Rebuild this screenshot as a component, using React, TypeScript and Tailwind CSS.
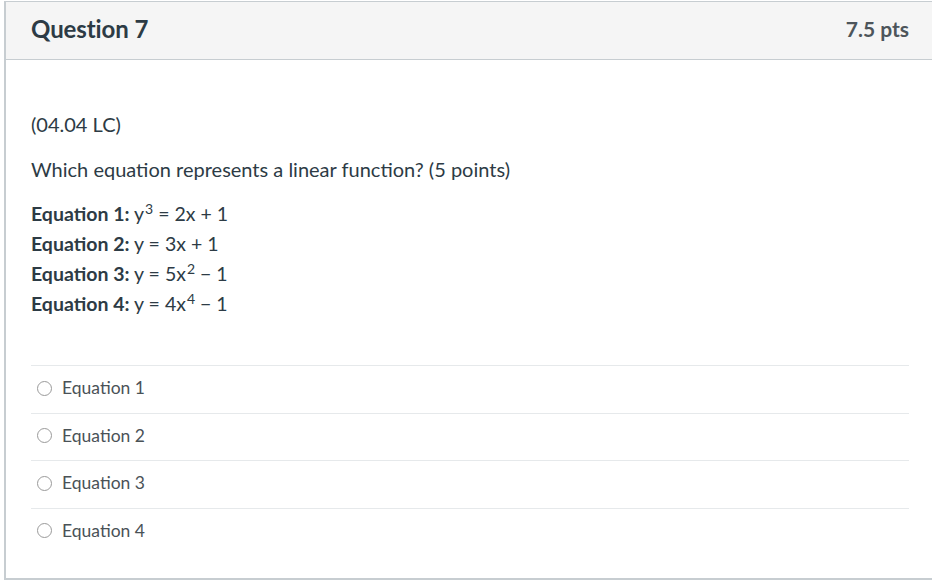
import React from "react";

const equations = [
  { label: "Equation 1:", lhs: "y", lhsSup: "3", rest: " = 2x + 1" },
  { label: "Equation 2:", body: "y = 3x + 1" },
  { label: "Equation 3:", body: "y = 5x", sup: "2", tail: " − 1" },
  { label: "Equation 4:", body: "y = 4x", sup: "4", tail: " − 1" },
];

const answers = ["Equation 1", "Equation 2", "Equation 3", "Equation 4"];

function Radio() {
  return <span className="inline-block h-[15px] w-[15px] shrink-0 rounded-full border border-[#9a9a9a] bg-white" />;
}

export default function App() {
  return (
    <div className="h-[581px] w-[932px] overflow-hidden bg-white font-['Lato',sans-serif] text-[#2d3b45]">
      <div className="ml-[4px] mt-[1px] h-[579px] border-l-2 border-t border-b-2 border-[#c7cdd1]">
        <div className="flex h-[58px] items-center justify-between border-b border-[#c7cdd1] bg-[#f5f5f5] pb-[4px] pl-[25px] pr-[23px]">
          <h2 className="text-[24px] font-bold tracking-[-0.1px]">Question 7</h2>
          <span className="text-[21px] font-bold text-[#4d555b]">7.5 pts</span>
        </div>
        <div className="pl-[25px] pr-[23px] pt-[52px]">
          <p className="text-[20px] leading-[24px]">(04.04 LC)</p>
          <p className="mt-[21px] text-[20px] leading-[24px]">Which equation represents a linear function? (5 points)</p>
          <div className="mt-[18px] text-[19.5px] leading-[30px]">
            {equations.map((e) => (
              <div key={e.label}>
                <span className="font-bold">{e.label}</span>{" "}
                {e.lhs ? (
                  <>
                    {e.lhs}
                    <sup className="ml-[1px] text-[14px]">{e.lhsSup}</sup>
                    {e.rest}
                  </>
                ) : (
                  <>
                    {e.body}
                    {e.sup && <sup className="ml-[1px] text-[14px]">{e.sup}</sup>}
                    {e.tail}
                  </>
                )}
              </div>
            ))}
          </div>
          <div className="mt-[46px]">
            {answers.map((a) => (
              <div key={a} className="flex h-[47.5px] items-center gap-[10px] border-t border-[#e6e9eb] pb-[2px] pl-[6px] text-[17.5px] text-[#4a5257]">
                <Radio />
                <span>{a}</span>
              </div>
            ))}
          </div>
        </div>
      </div>
    </div>
  );
}
